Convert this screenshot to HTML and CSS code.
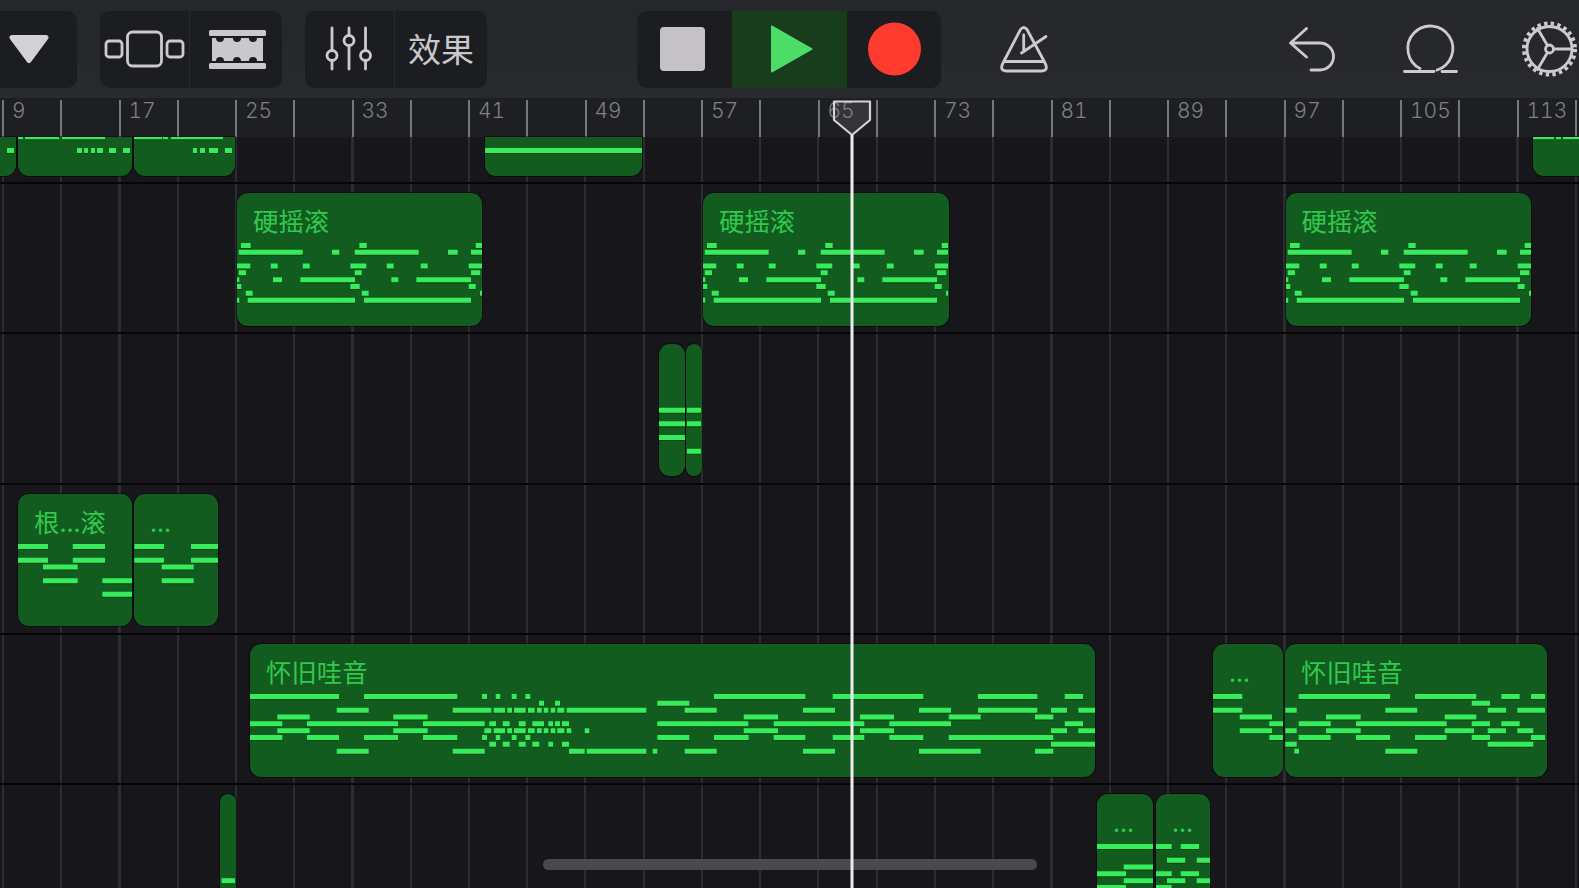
FILE: index.html
```html
<!DOCTYPE html>
<html lang="zh">
<head>
<meta charset="utf-8">
<title>音轨</title>
<link rel="stylesheet" href="styles.css">
</head>
<body>
<div class="app">
  <header class="toolbar">
    <div class="group group-first">
      <div class="cell cell-full">
        <svg class="ico" width="77" height="77" viewBox="0 11 77 77"><path class="solid" d="M12 37.500H46L29 60.500Z"/></svg>
      </div>
    </div>
    <div class="group group-view">
      <div class="cell cell-a">
        <svg class="ico" width="90" height="77" viewBox="100 11 90 77"><rect class="line" x="106" y="41" width="16" height="16" rx="3"/><rect class="line" x="127.500" y="32" width="34" height="34" rx="5"/><rect class="line" x="167" y="41" width="16" height="16" rx="3"/></svg>
      </div>
      <div class="cell cell-b">
        <svg class="ico" width="91" height="77" viewBox="191 11 91 77"><rect class="fill" x="209" y="30" width="57" height="6" rx="1.500"/><rect class="fill" x="209" y="63" width="57" height="6" rx="1.500"/><path class="fill" d="M212 38H216A4 4 0 0 0 224 38H233A4 4 0 0 0 241 38H249A4 4 0 0 0 257 38H263V61H257A4 4 0 0 0 249 61H241A4 4 0 0 0 233 61H224A4 4 0 0 0 216 61H212Z"/></svg>
      </div>
    </div>
    <div class="group group-fx">
      <div class="cell cell-a">
        <svg class="ico" width="89" height="77" viewBox="305 11 89 77"><path class="line" d="M332 28V50M332 61V69M349 28V35M349 46V69M365.500 28V50M365.500 61V69"/><circle class="line" cx="332" cy="55.500" r="5"/><circle class="line" cx="349" cy="40.500" r="5"/><circle class="line" cx="365.500" cy="55.500" r="5"/></svg>
      </div>
      <div class="cell cell-b fx-label">效果</div>
    </div>
    <div class="group group-transport">
      <div class="cell cell-stop">
        <svg class="ico" width="95" height="77" viewBox="637 11 95 77"><rect class="stop" x="660" y="27" width="45" height="44" rx="4"/></svg>
      </div>
      <div class="cell cell-play">
        <svg class="ico" width="115" height="77" viewBox="732 11 115 77"><path class="play" d="M772 26.500L811.500 49L772 71.500Z"/></svg>
      </div>
      <div class="cell cell-rec">
        <svg class="ico" width="94" height="77" viewBox="847 11 94 77"><circle class="rec" cx="894.500" cy="49" r="26.500"/></svg>
      </div>
    </div>
    <svg class="ico ico-metro" width="49" height="77" viewBox="1000 11 49 77"><path class="line" d="M1020.500 29.500Q1023.700 25.500 1027 29.500L1044.500 62Q1049.500 71 1041 71H1007Q998.500 71 1003.500 62ZM1005 61.500H1043M1023.700 35V50M1021.500 53L1046 36.500"/></svg>
    <svg class="ico ico-undo" width="47" height="77" viewBox="1289 11 47 77"><path class="line" d="M1306.500 28.500L1290.500 43L1306.500 57M1291 43H1320A13.500 13.500 0 0 1 1320 70H1311"/></svg>
    <svg class="ico ico-loop" width="55" height="77" viewBox="1403 11 55 77"><path class="line" d="M1420 68.500A22.500 22.500 0 1 1 1437 70M1404.500 71.500H1434M1442 71.500H1456.500"/></svg>
    <svg class="ico ico-gear" width="56" height="77" viewBox="1522 11 56 77"><circle class="gear-teeth" cx="1549.500" cy="49" r="25.500"/><circle class="line" cx="1549.500" cy="49" r="22.500"/><circle class="line" cx="1549.500" cy="49" r="4"/><path class="line" d="M1553.500 49H1572M1547.500 45.500L1537.500 28.500M1547.500 52.500L1537.500 69.500"/></svg>
  </header>

  <div class="ruler">
    <div class="bar"><span>9</span></div><div class="bar"></div>
    <div class="bar"><span>17</span></div><div class="bar"></div>
    <div class="bar"><span>25</span></div><div class="bar"></div>
    <div class="bar"><span>33</span></div><div class="bar"></div>
    <div class="bar"><span>41</span></div><div class="bar"></div>
    <div class="bar"><span>49</span></div><div class="bar"></div>
    <div class="bar"><span>57</span></div><div class="bar"></div>
    <div class="bar"><span>65</span></div><div class="bar"></div>
    <div class="bar"><span>73</span></div><div class="bar"></div>
    <div class="bar"><span>81</span></div><div class="bar"></div>
    <div class="bar"><span>89</span></div><div class="bar"></div>
    <div class="bar"><span>97</span></div><div class="bar"></div>
    <div class="bar"><span>105</span></div><div class="bar"></div>
    <div class="bar"><span>113</span></div><div class="bar"></div>
  </div>

  <main class="tracks">
    <section class="track track-top">
      <div class="clip clip-cut" style="left:-20px;width:36px"><svg class="notes" viewBox="-20 137 36 39"><path d="M7 150.500H14"/></svg></div>
      <div class="clip clip-cut" style="left:18px;width:114px"><svg class="notes" viewBox="18 137 114 39"><path d="M18 136.700H23M25 136.700H59M62 136.700H105M77 150.500H82M84 150.500H88M91 150.500H95M97 150.500H103M109 150.500H116M123 150.500H130"/></svg></div>
      <div class="clip clip-cut" style="left:134px;width:101px"><svg class="notes" viewBox="134 137 101 39"><path d="M134 136.700H162M163 136.700H168M171 136.700H223M193 150.500H197M200 150.500H205M209 150.500H218M225 150.500H232"/></svg></div>
      <div class="clip clip-cut" style="left:484.500px;width:157.500px"><svg class="notes" viewBox="484 137 158 39"><path d="M484 150.500H642"/></svg></div>
      <div class="clip clip-cut" style="left:1533px;width:80px"><svg class="notes" viewBox="1533 137 80 39"><path d="M1533 136.700H1554M1556 136.700H1561M1563 136.700H1590"/></svg></div>
    </section>

    <section class="track">
      <div class="clip" style="left:237px;width:245px">
        <div class="clip-name">硬摇滚</div>
        <svg class="notes" viewBox="237 0 245 132.500"><path id="rock" d="M241 52.500H250.700M359.300 52.500H366.700M475.700 52.500H482M238.700 59.300H302.700M332 59.300H339.300M354.700 59.300H418.700M448 59.300H457.700M471 59.300H482M237 73H250.300M270.700 73H277.700M302.700 73H309.700M350.300 73H366.300M386.700 73H393.700M420.700 73H427.700M468.700 73H482M238.700 79.800H246M354.700 79.800H361.700M471 79.800H480.300M237 86.700H239.300M273 86.700H282M300.300 86.700H355M391.300 86.700H398.300M416.300 86.700H471M237 93.500H241.300M350.300 93.500H359.700M468.700 93.500H475.700M245.700 100.300H252.700M361.700 100.300H368.700M480 100.300H482M237 107.200H239.300M247.700 107.200H355M364 107.200H471"/></svg>
      </div>
      <div class="clip" style="left:703px;width:245.500px">
        <div class="clip-name">硬摇滚</div>
        <svg class="notes" viewBox="237 0 245.500 132.500"><use href="#rock"/></svg>
      </div>
      <div class="clip" style="left:1285.500px;width:245px">
        <div class="clip-name">硬摇滚</div>
        <svg class="notes" viewBox="237 0 245 132.500"><use href="#rock"/></svg>
      </div>
    </section>

    <section class="track">
      <div class="clip" style="left:659px;width:26px"><svg class="notes" viewBox="659 0 26 132.500"><path d="M659 66.200H685M659 79.800H685M659 93.500H685"/></svg></div>
      <div class="clip" style="left:686px;width:16px"><svg class="notes" viewBox="686 0 16 132.500"><path d="M687 66.200H701M687 79.800H701M687 107.200H701"/></svg></div>
    </section>

    <section class="track">
      <div class="clip" style="left:18px;width:114px">
        <div class="clip-name">根...滚</div>
        <svg class="notes" viewBox="18 0 114 132.500"><path d="M18 52.500H48M72.700 52.500H105M18 66.200H48M72.700 66.200H105M43 73H77.700M43 86.700H77.700M102.300 86.700H132M102.300 100.300H132"/></svg>
      </div>
      <div class="clip" style="left:134px;width:84px">
        <div class="clip-name">...</div>
        <svg class="notes" viewBox="134 0 84 132.500"><path d="M134.300 52.500H164M191 52.500H218M134.300 66.200H164M191 66.200H218M161.700 73H193.700M161.700 86.700H193.700"/></svg>
      </div>
    </section>

    <section class="track">
      <div class="clip" style="left:250px;width:845px">
        <div class="clip-name">怀旧哇音</div>
        <svg class="notes" viewBox="250 0 845 132.500"><path d="M250 52.500H339M364 52.500H457.300M482 52.500H487M495.700 52.500H500.300M511.700 52.500H516.700M525.300 52.500H530.300M714 52.500H805.300M832.700 52.500H923.300M978 52.500H1037.300M1064.700 52.500H1083M539 59.300H544M555 59.300H560M657.300 59.300H689.300M336.700 66.200H368.700M452.700 66.200H491.300M493.700 66.200H505M507.300 66.200H512M514 66.200H525.700M528 66.200H534.700M537 66.200H541.700M543.700 66.200H548.300M550.700 66.200H555.300M557.300 66.200H564.300M566.700 66.200H646.300M684.700 66.200H716.700M803 66.200H835M919 66.200H951M978 66.200H1037.300M1051 66.200H1067M1078.300 66.200H1095M277.300 73H309.700M393.300 73H427.700M743.700 73H778M860 73H894M948.700 73H980.700M1035 73H1053.300M250 79.800H282.300M307 79.800H398M423 79.800H484.700M489.300 79.800H496M502.700 79.800H509.700M518.700 79.800H525.700M532.300 79.800H544M548.300 79.800H553M555 79.800H560M562 79.800H569M657.300 79.800H748.300M773.700 79.800H864.300M889.300 79.800H951M1064.700 79.800H1083M277.300 86.700H309.700M393.300 86.700H427.700M484.300 86.700H491.300M493.700 86.700H505M507.300 86.700H512M514 86.700H525.700M528 86.700H534.700M537 86.700H541.700M543.700 86.700H548.300M550.700 86.700H555.300M557.300 86.700H564.300M566.700 86.700H571.300M584.700 86.700H589.300M743.700 86.700H778M860 86.700H894M1051 86.700H1067M1078.300 86.700H1095M250 93.500H282.300M307 93.500H339M364 93.500H398M423 93.500H457.300M482 93.500H487M495.700 93.500H500.300M511.700 93.500H516.700M525.300 93.500H530.300M657.300 93.500H689.300M714 93.500H748.700M773.700 93.500H805.300M832.700 93.500H864.300M889.300 93.500H923.300M948.700 93.500H1053.300M489.300 100.300H496M502.700 100.300H509.700M518.700 100.300H525.700M532.300 100.300H539.300M548.300 100.300H553M562 100.300H569M1051 100.300H1095M336.700 107.200H368.700M452.700 107.200H484.700M569 107.200H584.700M586.700 107.200H646.300M652.700 107.200H657.300M684.700 107.200H716.700M803 107.200H835M919 107.200H980.700M1035 107.200H1053.300"/></svg>
      </div>
      <div class="clip" style="left:1213px;width:70px">
        <div class="clip-name">...</div>
        <svg class="notes" viewBox="1213 0 70 132.500"><path d="M1213 52.500H1242.300M1213 66.200H1242.300M1239.700 73H1272M1269.300 79.800H1283M1239.700 86.700H1272M1269.300 93.500H1283"/></svg>
      </div>
      <div class="clip" style="left:1285px;width:262px">
        <div class="clip-name">怀旧哇音</div>
        <svg class="notes" viewBox="1285 0 262 132.500"><path d="M1298.700 52.500H1390M1415 52.500H1476.300M1501.300 52.500H1519.700M1531 52.500H1545M1471.700 59.300H1490M1285.300 66.200H1296.700M1385.300 66.200H1417.300M1487.700 66.200H1506M1517.300 66.200H1545M1326 73H1360.700M1444.700 73H1476.300M1298.700 79.800H1330.700M1356 79.800H1446.700M1471.700 79.800H1490M1501.300 79.800H1519.700M1285.300 86.700H1296.700M1326 86.700H1360.700M1444.700 86.700H1474M1487.700 86.700H1506M1517.300 86.700H1533.300M1298.700 93.500H1330.700M1356 93.500H1390M1415 93.500H1446.700M1471.700 93.500H1490M1531 93.500H1545M1285.300 100.300H1296.700M1487.700 100.300H1533.300M1294.300 107.200H1299M1385.300 107.200H1417.300"/></svg>
      </div>
    </section>

    <section class="track track-last">
      <div class="clip" style="left:219.500px;width:16.500px"><svg class="notes" viewBox="219.500 0 16.500 132.500"><path d="M221 86.700H234.500"/></svg></div>
      <div class="clip" style="left:1097px;width:56px">
        <div class="clip-name">...</div>
        <svg class="notes" viewBox="1097 0 56 132.500"><path d="M1097 52.500H1153M1123.700 73H1153M1097 79.800H1126M1123.700 86.700H1153M1097 93.500H1126"/></svg>
      </div>
      <div class="clip" style="left:1156px;width:54px">
        <div class="clip-name">...</div>
        <svg class="notes" viewBox="1156 0 54 132.500"><path d="M1156 52.500H1171.700M1180.700 52.500H1199M1167 66.200H1185.300M1196.700 66.200H1210M1156 79.800H1171.700M1180.700 79.800H1199M1167 86.700H1185.300M1196.700 86.700H1210M1156 93.500H1171.700"/></svg>
      </div>
    </section>
  </main>

  <div class="scrollbar"></div>
  <svg class="playhead" width="40" height="788" viewBox="832 100 40 788"><path class="head" d="M834 101.500H870V120L852 135L834 120Z"/><path class="stem" d="M852 135V888"/></svg>
</div>
</body>
</html>
```

FILE: styles.css
```css
* { box-sizing: border-box; }

html, body {
  margin: 0;
  padding: 0;
  background: #17171b;
}

.app {
  position: relative;
  width: 1579px;
  height: 888px;
  overflow: hidden;
  display: flex;
  flex-direction: column;
  font-family: "Noto Sans CJK SC", "Noto Sans", sans-serif;
}

/* toolbar */
.toolbar {
  flex: none;
  height: 98px;
  padding-top: 11px;
  display: flex;
  align-items: flex-start;
  background: linear-gradient(180deg, #26272b 0%, #26282b 60%, #282a2d 100%);
}

.group {
  height: 77px;
  display: flex;
  background: #1c1d21;
  border-radius: 10px;
  overflow: hidden;
}

.group-first { width: 77px; border-radius: 0 10px 10px 0; }
.group-view { width: 182px; margin-left: 23px; }
.group-fx { width: 182px; margin-left: 23px; }
.group-transport { width: 304px; margin-left: 150px; }

.cell { display: flex; align-items: center; justify-content: center; }
.cell-full { width: 100%; }
.cell-a { flex: none; width: 90px; border-right: 1px solid #2a2b2f; }
.cell-b { flex: 1; }
.cell-stop { width: 95px; }
.cell-play { width: 115px; background: #183d1c; }
.cell-rec { width: 94px; }

.fx-label {
  padding-bottom: 3px;
  color: #c9c9cb;
  font-size: 33px;
  line-height: 1;
}

.ico { display: block; flex: none; }
.ico-metro { margin-left: 59px; }
.ico-undo { margin-left: 240px; }
.ico-loop { margin-left: 67px; }
.ico-gear { margin-left: 64px; }

.line { fill: none; stroke: #cbcbcd; stroke-width: 2.8; stroke-linecap: round; stroke-linejoin: round; }
.fill { fill: #c9c9cb; }
.solid { fill: #d2d2d4; stroke: #d2d2d4; stroke-width: 5; stroke-linejoin: round; }
.stop { fill: #c4c2c5; }
.play { fill: #4cdd68; stroke: #4cdd68; stroke-width: 2; stroke-linejoin: round; }
.rec { fill: #ff3b30; }
.gear-teeth { fill: none; stroke: #cbcbcd; stroke-width: 4; stroke-dasharray: 3.4 3.3; }

/* ruler */
.ruler {
  flex: none;
  height: 39px;
  padding: 2px 0 0 2px;
  display: flex;
  background: #1e1f23;
}

.bar {
  flex: none;
  width: 58.25px;
  border-left: 2px solid #77787b;
  color: #7f8084;
  font-family: Inter, "Liberation Sans", sans-serif;
  font-size: 21px;
  font-weight: 300;
  font-variant-numeric: tabular-nums;
  line-height: 22px;
  white-space: nowrap;
}

.bar span { display: block; padding: 0 0 0 8px; }

/* tracks */
.tracks {
  flex: 1;
  min-height: 0;
  display: flex;
  flex-direction: column;
  background-color: #17171b;
  background-image: repeating-linear-gradient(90deg, #2d2d31 0, #2d2d31 2px, transparent 2px, transparent 58.25px);
  background-position: 2px 0;
}

.track {
  position: relative;
  flex: none;
  height: 150.3px;
  border-bottom: 2px solid #060607;
}

.track-top { height: 47px; }
.track-last { border-bottom: 0; flex: 1; }

.clip {
  position: absolute;
  top: 9.3px;
  height: 132.5px;
  overflow: hidden;
  background: #125c1f;
  border-radius: 11px;
  box-shadow: 0 0 0 1px rgba(0, 0, 0, 0.45);
}

.clip-cut {
  top: 0;
  height: 39px;
  border-radius: 0 0 11px 11px;
}

.clip-name {
  padding: 12px 0 0 16px;
  color: #30c94e;
  font-size: 25.4px;
  line-height: 30px;
  white-space: nowrap;
}

.notes {
  position: absolute;
  left: 0;
  top: 0;
  width: 100%;
  height: 100%;
  fill: none;
  stroke: #36ec5a;
  stroke-width: 5;
  filter: drop-shadow(0 1px 0 rgba(0, 50, 10, 0.6));
}

/* overlays */
.scrollbar {
  position: absolute;
  left: 543px;
  top: 859px;
  width: 494px;
  height: 11px;
  border-radius: 6px;
  background: #4a4a4d;
}

.playhead {
  position: absolute;
  left: 832px;
  top: 100px;
}

.head { fill: rgba(120, 120, 122, 0.25); stroke: #d4d4d4; stroke-width: 2.2; stroke-linejoin: round; }
.stem { fill: none; stroke: #ececec; stroke-width: 3; }
```
